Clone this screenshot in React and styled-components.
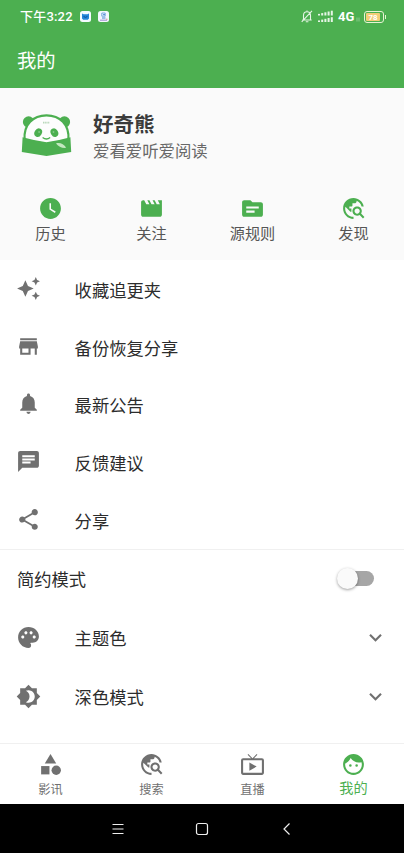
import React, { useState } from "react";
import styled, { createGlobalStyle } from "styled-components";
import {
  MdAutoAwesome,
  MdBrightness4,
  MdCategory,
  MdChat,
  MdExpandMore,
  MdFace,
  MdLiveTv,
  MdMovie,
  MdNotifications,
  MdPalette,
  MdShare,
  MdStore,
  MdTopic,
  MdTravelExplore,
  MdWatchLater,
} from "react-icons/md";

const GREEN = "#4caf50";
const GREY = "#707070";

const GlobalStyle = createGlobalStyle`
  * {
    box-sizing: border-box;
  }

  body {
    margin: 0;
    background: #fff;
    font-family: Roboto, "Noto Sans CJK SC", sans-serif;
  }

  svg {
    display: block;
    flex-shrink: 0;
  }
`;

const Screen = styled.div`
  display: flex;
  flex-direction: column;
  height: 853px;
  overflow: hidden;
  background: #fff;
`;

const TopArea = styled.header`
  flex: none;
  height: 88px;
  background: ${GREEN};
  color: #fff;
`;

const StatusBar = styled.div`
  display: flex;
  align-items: center;
  height: 33px;
  padding: 0 20px 0 20px;
`;

const Clock = styled.span`
  flex: 1;
  display: flex;
  align-items: center;
  gap: 7px;
  font-size: 13px;
  font-weight: 500;
  line-height: 16px;
  white-space: nowrap;
`;

const Time = styled.span`
  letter-spacing: 0.2px;
`;

const StatusIcons = styled.div`
  display: flex;
  align-items: center;
`;

const Network = styled.span`
  width: 18px;
  margin-left: 4px;
  font-size: 13px;
  font-weight: 700;
  line-height: 16px;
`;

const Battery = styled.span`
  position: relative;
  display: flex;
  width: 20px;
  height: 12px;
  margin-left: 4px;
  padding: 1px;
  border: 1px solid #e8f3d4;
  border-radius: 3px;

  &::after {
    content: "";
    position: absolute;
    top: 3px;
    right: -3px;
    width: 1px;
    height: 4px;
    background: #e8f3d4;
  }
`;

const BatteryLevel = styled.span`
  width: 14px;
  background: #f3cd78;
  border-radius: 1px;
  color: #fff;
  font-size: 8px;
  font-weight: 700;
  line-height: 9px;
  text-align: center;
`;

const Title = styled.h1`
  margin: 0;
  padding-left: 17px;
  font-size: 19.3px;
  font-weight: 400;
  line-height: 57px;
`;

const Profile = styled.section`
  flex: none;
  height: 172px;
  background: #fafafa;
`;

const User = styled.div`
  display: flex;
  align-items: center;
  gap: 21px;
  height: 96px;
  padding: 0 21px;
`;

const UserText = styled.div`
  padding-top: 2px;
`;

const UserName = styled.div`
  color: #3b3b3b;
  font-size: 20.5px;
  font-weight: 700;
  line-height: 28px;
`;

const UserBio = styled.div`
  color: #686868;
  font-size: 16.4px;
  line-height: 25px;
`;

const Shortcuts = styled.div`
  display: grid;
  grid-template-columns: repeat(4, 1fr);
  padding-top: 12px;
`;

const Shortcut = styled.div`
  display: flex;
  flex-direction: column;
  align-items: center;
  color: #555;
  font-size: 15.2px;
  line-height: 26px;

  svg {
    color: ${GREEN};
  }
`;

const Row = styled.li`
  display: flex;
  align-items: center;
  height: ${({ $height }) => $height || 57.6}px;
  padding: 0 16px;
  color: #2c2c2c;
  font-size: 17.3px;
  list-style: none;

  > svg {
    color: ${GREY};
  }
`;

const RowLabel = styled.span`
  flex: 1;
  padding-left: ${({ $indent }) => ($indent ? 33.6 : 1)}px;
`;

const Menu = styled.ul`
  flex: none;
  margin: 0;
  padding: 0 0 1px;
  list-style: none;
  border-bottom: 1px solid #f0f0f0;

  ${RowLabel} {
    padding-top: 2px;
  }
`;

const Settings = styled.div`
  flex: 1;
  min-height: 0;
  overflow: hidden;
`;

const Toggle = styled.button`
  display: flex;
  align-items: center;
  width: 37px;
  height: 22px;
  margin-right: 14px;
  padding: 0;
  border: 0;
  background: none;

  &::before {
    content: "";
    width: 34px;
    height: 15px;
    margin: 0 -34px 0 3px;
    flex: none;
    border-radius: 8px;
    background: ${({ $on }) => ($on ? "#a5d7a7" : "#a6a6a6")};
  }
`;

const Knob = styled.span`
  width: 21px;
  height: 21px;
  margin-left: -3px;
  border-radius: 50%;
  background: ${({ $on }) => ($on ? GREEN : "#fafafa")};
  box-shadow: 0 1px 3px rgba(0, 0, 0, 0.38);
  transform: translateX(${({ $on }) => ($on ? 17 : 0)}px);
`;

const TabBar = styled.nav`
  flex: none;
  display: grid;
  grid-template-columns: repeat(4, 1fr);
  height: 61px;
  border-top: 1px solid #f0f0f0;
  background: #fff;
`;

const Tab = styled.div`
  display: flex;
  flex-direction: column;
  align-items: center;
  padding-top: 8px;
  color: ${({ $active }) => ($active ? GREEN : GREY)};
  font-size: ${({ $active }) => ($active ? 14.2 : 12.2)}px;
  line-height: ${({ $active }) => ($active ? 23 : 26)}px;
`;

const SystemBar = styled.footer`
  flex: none;
  display: flex;
  align-items: center;
  justify-content: center;
  gap: 70px;
  height: 49px;
  background: #000;
`;

const shortcuts = [
  { label: "历史", Icon: MdWatchLater },
  { label: "关注", Icon: MdMovie },
  { label: "源规则", Icon: MdTopic },
  { label: "发现", Icon: MdTravelExplore },
];

const menu = [
  { label: "收藏追更夹", Icon: MdAutoAwesome },
  { label: "备份恢复分享", Icon: MdStore },
  { label: "最新公告", Icon: MdNotifications },
  { label: "反馈建议", Icon: MdChat },
  { label: "分享", Icon: MdShare },
];

const expandable = [
  { label: "主题色", Icon: MdPalette },
  { label: "深色模式", Icon: MdBrightness4 },
];

const tabs = [
  { label: "影讯", Icon: MdCategory },
  { label: "搜索", Icon: MdTravelExplore },
  { label: "直播", Icon: MdLiveTv },
  { label: "我的", Icon: MdFace },
];

function CatAppIcon() {
  return (
    <svg width="11" height="11" viewBox="0 0 11 11">
      <rect width="11" height="11" rx="2.5" fill="#f4fbff" />
      <path d="M2 2.5l1.6.8h3.8L9 2.5v5L7.8 8.7H3.2L2 7.5z" fill="#2385d8" />
      <path d="M3.6 5.6q1.9 1.4 3.8 0" stroke="#0c4d94" fill="none" />
    </svg>
  );
}

function PersonAppIcon() {
  return (
    <svg width="11" height="11" viewBox="0 0 11 11">
      <rect width="11" height="11" rx="2.5" fill="#f2f7fd" />
      <path d="M3.8 2h3.4v3.2H3.8z" fill="none" stroke="#5b95d8" strokeWidth="0.8" />
      <path d="M5 3.7h2M4 7h3.5" stroke="#2f77cb" strokeWidth="0.9" />
      <path d="M2 9.2h7" stroke="#a99bd6" strokeWidth="1.2" />
      <circle cx="8.8" cy="8.2" r="0.8" fill="#e39aa0" />
    </svg>
  );
}

function MutedBell() {
  return (
    <svg width="12" height="13" viewBox="0 0 12 13" fill="none" stroke="#e6f5e6" strokeWidth="1.1">
      <path d="M1.3 10h9.4M2.5 9.8V5.5C2.5 3.2 4 1.8 6 1.8s3.5 1.4 3.5 3.7v4.3M6 .5v1.2M4.8 11.8h2.6M.7 11.8L11 .8" />
    </svg>
  );
}

const SignalSvg = styled.svg`
  margin-left: 5px;
`;

function Signal() {
  const bars = [0, 1, 2, 3, 4];
  return (
    <SignalSvg width="16" height="13" viewBox="0 0 16 13" fill="#e6f5e6">
      {bars.map((n) => (
        <g key={n}>
          <rect x={n * 3.2} y={3.9 - n * 0.8} width="2" height={1.6 + n * 0.8} />
          <rect x={n * 3.2} y={10.4 - n * 0.8} width="2" height={1.6 + n * 0.8} />
        </g>
      ))}
    </SignalSvg>
  );
}

function DataArrows() {
  return (
    <svg width="4" height="13" viewBox="0 0 4 13" stroke="#a6d7a8" strokeWidth="0.7">
      <path d="M1 7.5v4M3 7.5v4" />
    </svg>
  );
}

function PandaLogo() {
  return (
    <svg width="51" height="44" viewBox="0 0 51 44">
      <circle cx="7.6" cy="8" r="5.7" fill={GREEN} />
      <circle cx="43.4" cy="8" r="5.7" fill={GREEN} />
      <path
        d="M3.6 26C2.2 10 12.5 1.3 25.5 1.3S48.8 10 47.4 26l-21.9 4z"
        fill="#fdfdfd"
        stroke={GREEN}
        strokeWidth="2.2"
      />
      <path d="M1.6 23.3q12 3.4 23.9 4.9 11.9-1.5 23.9-4.9L50.2 38l-24.7 4L.8 38z" fill={GREEN} />
      <ellipse cx="17.2" cy="18.6" rx="3.6" ry="4.5" transform="rotate(30 17.2 18.6)" fill={GREEN} />
      <ellipse cx="33.4" cy="18.6" rx="3.6" ry="4.5" transform="rotate(-30 33.4 18.6)" fill={GREEN} />
      <circle cx="18.1" cy="18" r="0.9" fill="#86c989" />
      <circle cx="32.5" cy="18" r="0.9" fill="#86c989" />
      <path d="M21.6 23.6q3.8 2.8 7.6 0" fill="none" stroke={GREEN} strokeWidth="1.3" />
      <path d="M22 8.6h6.5" stroke="#b9d8ba" strokeWidth="1.6" strokeDasharray="1.2 .5" />
      <path d="M35 29.4c4-1 8 .7 10.2 4.4-4.2.5-8-1.4-10.2-4.4z" fill="#c4e8c0" />
    </svg>
  );
}

function App() {
  const [simple, setSimple] = useState(false);

  return (
    <Screen>
      <GlobalStyle />
      <TopArea>
        <StatusBar>
          <Clock>
            <Time>下午3:22</Time>
            <CatAppIcon />
            <PersonAppIcon />
          </Clock>
          <StatusIcons>
            <MutedBell />
            <Signal />
            <Network>4G</Network>
            <DataArrows />
            <Battery>
              <BatteryLevel>78</BatteryLevel>
            </Battery>
          </StatusIcons>
        </StatusBar>
        <Title>我的</Title>
      </TopArea>

      <Profile>
        <User>
          <PandaLogo />
          <UserText>
            <UserName>好奇熊</UserName>
            <UserBio>爱看爱听爱阅读</UserBio>
          </UserText>
        </User>
        <Shortcuts>
          {shortcuts.map(({ label, Icon }) => (
            <Shortcut key={label}>
              <Icon size={25} />
              {label}
            </Shortcut>
          ))}
        </Shortcuts>
      </Profile>

      <Menu>
        {menu.map(({ label, Icon }) => (
          <Row key={label}>
            <Icon size={25} />
            <RowLabel $indent>{label}</RowLabel>
          </Row>
        ))}
      </Menu>

      <Settings>
        <Row as="div" $height={57.6}>
          <RowLabel>简约模式</RowLabel>
          <Toggle $on={simple} onClick={() => setSimple(!simple)}>
            <Knob $on={simple} />
          </Toggle>
        </Row>
        {expandable.map(({ label, Icon }) => (
          <Row as="div" key={label} $height={59.3}>
            <Icon size={25} />
            <RowLabel $indent>{label}</RowLabel>
            <MdExpandMore size={25} />
          </Row>
        ))}
      </Settings>

      <TabBar>
        {tabs.map(({ label, Icon }) => (
          <Tab key={label} $active={label === "我的"}>
            <Icon size={25} />
            {label}
          </Tab>
        ))}
      </TabBar>

      <SystemBar>
        <svg width="14" height="14" viewBox="0 0 14 14" stroke="#eee" strokeWidth="1.2">
          <path d="M1.5 2.5h11M1.5 7h11M1.5 11.5h11" />
        </svg>
        <svg width="14" height="14" viewBox="0 0 14 14" fill="none" stroke="#eee" strokeWidth="1.2">
          <rect x="1.5" y="1.5" width="11" height="11" rx="2" />
        </svg>
        <svg width="14" height="14" viewBox="0 0 14 14" fill="none" stroke="#eee" strokeWidth="1.2">
          <path d="M10.5 1.5L5 7l5.5 5.5" />
        </svg>
      </SystemBar>
    </Screen>
  );
}

export default App;
